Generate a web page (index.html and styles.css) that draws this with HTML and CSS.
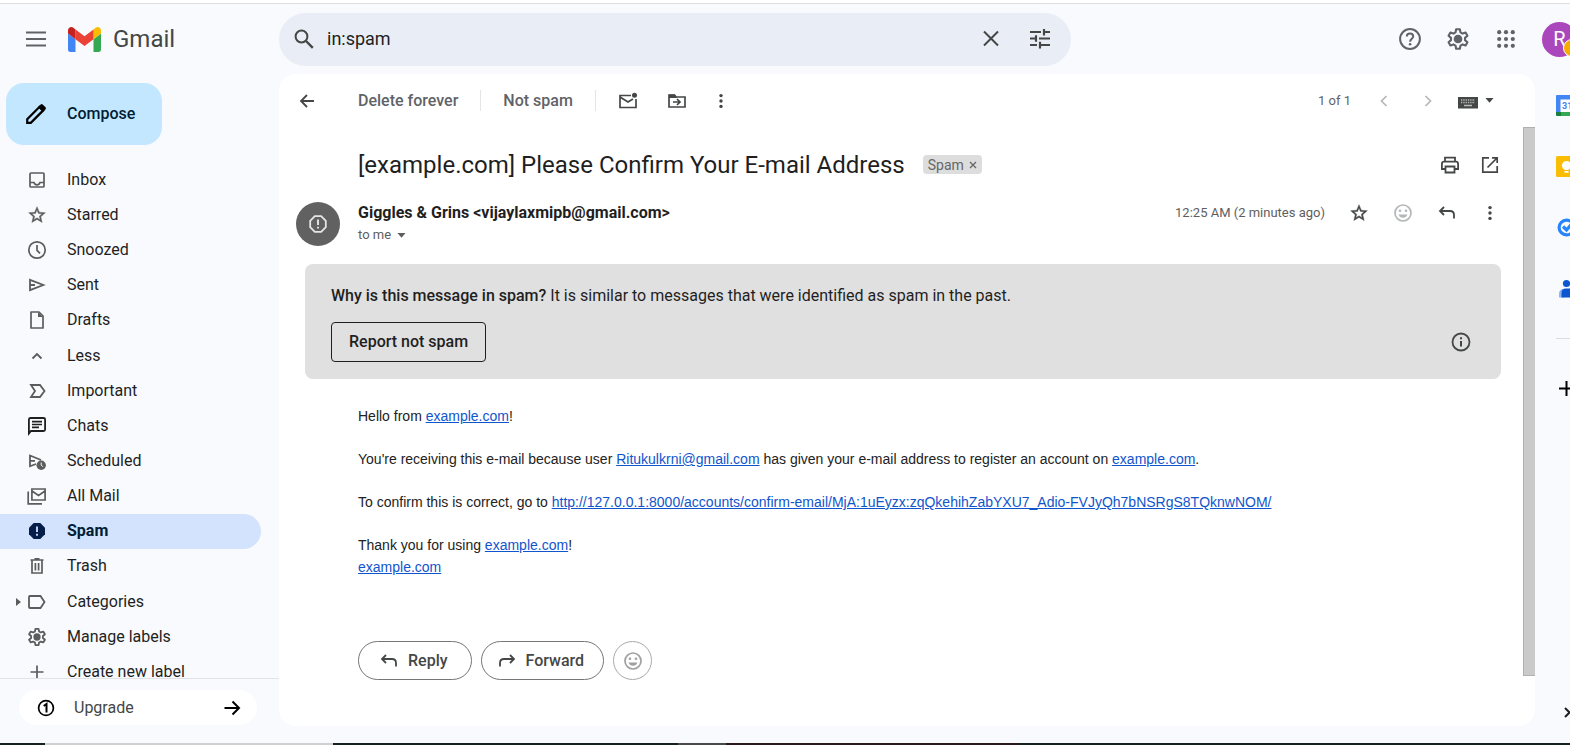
FILE: index.html
```html
<!DOCTYPE html>
<html lang="en">
<head>
<meta charset="utf-8">
<title>Gmail - Spam</title>
<link rel="stylesheet" href="styles.css">
</head>
<body>
<svg class="sprite" aria-hidden="true">
  <symbol id="reply" viewBox="0 0 20 20"><path d="M7 4 3 8l4 4M3.500 8H13q4 0 4 4v3.500" fill="none" stroke="currentColor" stroke-width="1.800"/></symbol>
  <symbol id="smile" viewBox="0 0 20 20"><circle cx="10" cy="10" r="8" fill="none" stroke="currentColor" stroke-width="1.700"/><circle cx="7" cy="7.800" r="1.300" fill="currentColor"/><circle cx="13" cy="7.800" r="1.300" fill="currentColor"/><path d="M5.500 11.500h9c-.7 2-2.400 3.300-4.500 3.300s-3.800-1.300-4.500-3.300z" fill="currentColor"/></symbol>
  <symbol id="more" viewBox="0 0 20 20"><circle cx="10" cy="4" r="1.900"/><circle cx="10" cy="10" r="1.900"/><circle cx="10" cy="16" r="1.900"/></symbol>
  <symbol id="star" viewBox="0 0 24 24"><path d="M22 9.240l-7.190-.62L12 2 9.190 8.630 2 9.240l5.460 4.730L5.820 21 12 17.270 18.180 21l-1.630-7.030L22 9.240zM12 15.400l-3.760 2.270 1-4.280-3.320-2.880 4.380-.38L12 6.100l1.710 4.040 4.380.38-3.320 2.880 1 4.280L12 15.400z" stroke="currentColor" stroke-width=".5"/></symbol>
  <symbol id="gear" viewBox="0 0 24 24"><path d="M10.300 2h3.400l.6 2.900 1.900 1.100 2.800-.95 1.700 2.950-2.200 1.950v2.100l2.200 1.950-1.700 2.950-2.800-.95-1.900 1.100-.6 2.900h-3.400l-.6-2.900L7.800 16l-2.800.95L3.300 14l2.200-1.950v-2.100L3.300 8 5 5.050 7.800 6l1.900-1.100z" transform="translate(0 1)" fill="none" stroke="currentColor" stroke-width="2" stroke-linejoin="round"/><circle cx="12" cy="12" r="4"/></symbol>
</svg>

<div class="app">
  <header class="topbar">
    <div class="brand">
      <button class="icon-btn" aria-label="Main menu"><svg class="i20" viewBox="0 0 20 20"><path d="M0 3.500h20M0 10h20M0 16.500h20" stroke="currentColor" stroke-width="2"/></svg></button>
      <a class="logo" href="#">
        <svg class="m-logo" viewBox="52 42 88 66" aria-hidden="true"><path fill="#4285f4" d="M58 108h14V74L52 59v43c0 3.320 2.690 6 6 6"/><path fill="#34a853" d="M120 108h14c3.320 0 6-2.690 6-6V59l-20 15"/><path fill="#fbbc04" d="M120 48v26l20-15v-8c0-7.420-8.470-11.650-14.400-7.200"/><path fill="#ea4335" d="M72 74V48l24 18 24-18v26L96 92"/><path fill="#c5221f" d="M52 51v8l20 15V48l-5.600-4.200c-5.940-4.450-14.400-.22-14.400 7.200"/></svg>
        <span>Gmail</span>
      </a>
    </div>
    <form class="search">
      <button class="icon-btn" type="button" aria-label="Search"><svg class="i20" viewBox="0 0 20 20"><circle cx="7.500" cy="7.500" r="5.900" fill="none" stroke="currentColor" stroke-width="2"/><path d="m12 12 6.800 6.800" stroke="currentColor" stroke-width="2.400"/></svg></button>
      <input type="text" value="in:spam" aria-label="Search mail">
      <button class="icon-btn" type="button" aria-label="Clear search"><svg class="i20" viewBox="0 0 20 20"><path d="m3 2.500 14 14M17 2.500l-14 14" stroke="currentColor" stroke-width="2"/></svg></button>
      <button class="icon-btn tune" type="button" aria-label="Search options"><svg class="i20" viewBox="0 0 20 20"><path d="M0 3h11M14 3h6M14 0v6.500M0 9.500h6M9 9.500h11M6 6.200v6.600M0 16h7M10 16h10M10 12.700V19.500" stroke="currentColor" stroke-width="2.200"/></svg></button>
    </form>
    <div class="tools">
      <button class="icon-btn" aria-label="Support"><svg class="i22" viewBox="0 0 22 22"><circle cx="11" cy="11" r="9.900" fill="none" stroke="currentColor" stroke-width="2"/><path d="M7.800 8.600c0-1.900 1.400-3.200 3.200-3.200s3.200 1.200 3.200 3c0 2.300-3.100 2.600-3.100 5.300" fill="none" stroke="currentColor" stroke-width="2"/><circle cx="11.100" cy="16.300" r="1.300"/></svg></button>
      <button class="icon-btn" aria-label="Settings"><svg class="i26"><use href="#gear"/></svg></button>
      <button class="icon-btn" aria-label="Google apps"><svg class="i18" viewBox="0 0 18 18"><circle cx="2.200" cy="2.200" r="2.100"/><circle cx="9" cy="2.200" r="2.100"/><circle cx="15.800" cy="2.200" r="2.100"/><circle cx="2.200" cy="9" r="2.100"/><circle cx="9" cy="9" r="2.100"/><circle cx="15.800" cy="9" r="2.100"/><circle cx="2.200" cy="15.800" r="2.100"/><circle cx="9" cy="15.800" r="2.100"/><circle cx="15.800" cy="15.800" r="2.100"/></svg></button>
      <button class="account" aria-label="Account">R<span class="alert"></span></button>
    </div>
  </header>

  <aside class="sidebar">
    <button class="compose"><svg class="i20" viewBox="0 0 20 20"><path d="M1.200 18.800v-3.600L13.600 2.800l3.600 3.600L4.800 18.800z" fill="none" stroke="currentColor" stroke-width="2.200"/><path d="m12 3.200 2.700-2.700q1-.8 2 0l2.800 2.800q.8 1 0 2L16.800 8z"/></svg>Compose</button>
    <nav class="folders">
      <a href="#"><svg class="i20" viewBox="0 0 20 20"><rect x="3" y="3" width="14" height="14" rx="1" fill="none" stroke="currentColor" stroke-width="1.700"/><path d="M3 12.500h4c.5 1.600 1.600 2.300 3 2.300s2.500-.7 3-2.300h4" fill="none" stroke="currentColor" stroke-width="1.700"/></svg>Inbox</a>
      <a href="#"><svg class="i20"><use href="#star"/></svg>Starred</a>
      <a href="#"><svg class="i20" viewBox="0 0 20 20"><circle cx="10" cy="10" r="8.200" fill="none" stroke="currentColor" stroke-width="1.700"/><path d="M10 5v5.300l3 3" fill="none" stroke="currentColor" stroke-width="1.700"/></svg>Snoozed</a>
      <a href="#"><svg class="i20" viewBox="0 0 20 20"><path d="M3 4.800 16.300 10 3 15.200zM3 10h5" fill="none" stroke="currentColor" stroke-width="1.800"/></svg>Sent</a>
      <a href="#"><svg class="i20" viewBox="0 0 20 20"><path d="M4 2h8l4 4v12H4z" fill="none" stroke="currentColor" stroke-width="1.700" stroke-linejoin="round"/><path d="M11 2v5h5z"/></svg>Drafts</a>
      <a href="#" class="section"><svg class="i20" viewBox="0 0 20 20"><path d="m5.500 12.500 4.500-4.500 4.500 4.500" fill="none" stroke="currentColor" stroke-width="1.800"/></svg>Less</a>
      <a href="#"><svg class="i20" viewBox="0 0 20 20"><path d="M4 4h9l4.500 6-4.500 6H4l4-6z" fill="none" stroke="currentColor" stroke-width="1.800"/></svg>Important</a>
      <a href="#"><svg class="i20 dark" viewBox="0 0 20 20"><path d="M1.900 17.500V3.500Q2 2 3.500 2h13q1.600 0 1.600 1.500v10q0 1.500-1.600 1.500H4z" fill="none" stroke="currentColor" stroke-width="1.800"/><path d="M5 5.700h10M5 8.500h10M5 11.300h7" stroke="currentColor" stroke-width="1.700"/></svg>Chats</a>
      <a href="#"><svg class="i20" viewBox="0 0 20 20"><path d="M9 13 3 15.300V4.500L14 9M3 9.900h5" fill="none" stroke="currentColor" stroke-width="1.800"/><circle cx="14.200" cy="14.200" r="4.700"/><path d="M14.200 11.500V14l1.700 1.800" fill="none" stroke="#f8fafd"/></svg>Scheduled</a>
      <a href="#"><svg class="i20" viewBox="0 0 20 20"><path d="M4.900 3h13.200v11H4.900zM5 5l6.500 4.500L18 5M1.200 5.500v12.300H15" fill="none" stroke="currentColor" stroke-width="1.700"/></svg>All Mail</a>
      <a href="#" class="current" aria-current="page"><svg class="i20" viewBox="0 0 20 20"><path d="M6.700 2h6.600L18 6.700v6.600L13.300 18H6.700L2 13.300V6.700z"/><path d="M10 5.500v5.500M10 12.700v2" stroke="#d3e3fd" stroke-width="1.800"/></svg>Spam</a>
      <a href="#"><svg class="i20" viewBox="0 0 20 20"><path d="M3.500 4h13M7.500 2.800h5M5 4.500V17h10V4.500M8.400 7v7.500M11.600 7v7.500" fill="none" stroke="currentColor" stroke-width="1.700"/></svg>Trash</a>
      <a href="#" class="section categories"><svg class="twisty" viewBox="0 0 5 8"><path d="M0 0l5 4-5 4z"/></svg><svg class="i20" viewBox="0 0 20 20"><path d="M3 4h10.500l4 6-4 6H3q-1 0-1-1V5q0-1 1-1z" fill="none" stroke="currentColor" stroke-width="1.800"/></svg>Categories</a>
      <a href="#"><svg class="i20" viewBox="1 1 22 22"><use href="#gear" width="24" height="24"/></svg>Manage labels</a>
      <a href="#"><svg class="i20" viewBox="0 0 20 20"><path d="M3.500 10h13M10 3.500v13" stroke="currentColor" stroke-width="1.700"/></svg>Create new label</a>
    </nav>
    <div class="upgrade-bar">
      <button class="upgrade"><svg class="i18" viewBox="0 0 18 18"><circle cx="9" cy="9" r="7.400" fill="none" stroke="currentColor" stroke-width="1.700"/><path d="M6.700 7 9.500 5v8.500" fill="none" stroke="currentColor" stroke-width="2"/></svg><span>Upgrade</span><svg class="i18" viewBox="0 0 18 18"><path d="M1.500 9h14M9.500 2.500 16 9l-6.500 6.500" fill="none" stroke="currentColor" stroke-width="2"/></svg></button>
    </div>
  </aside>

  <main class="panel">
    <div class="toolbar">
      <button class="icon-btn back" aria-label="Back to Spam"><svg class="i18" viewBox="0 0 18 18"><path d="M16 9H3M9 3 3 9l6 6" fill="none" stroke="currentColor" stroke-width="1.800"/></svg></button>
      <button class="text-btn">Delete forever</button>
      <span class="rule"></span>
      <button class="text-btn">Not spam</button>
      <span class="rule"></span>
      <div class="actions">
        <button class="icon-btn" aria-label="Mark as unread"><svg class="i20" viewBox="0 0 20 20"><path d="M13 4.500H2v12h16V8M2 6l8 5 5-3" fill="none" stroke="currentColor" stroke-width="1.700"/><circle cx="16.500" cy="4.200" r="2.500"/></svg></button>
        <button class="icon-btn" aria-label="Move to"><svg class="i20" viewBox="0 0 20 20"><path d="M2 16V4h5.500L9 6h9v10z" fill="none" stroke="currentColor" stroke-width="1.700"/><path d="M2 3.500h6L10 7H2z"/><path d="M6 11h6M10 8l3 3-3 3" fill="none" stroke="currentColor" stroke-width="1.700"/></svg></button>
        <button class="icon-btn more" aria-label="More"><svg class="i18"><use href="#more"/></svg></button>
      </div>
      <span class="count">1 of 1</span>
      <div class="pager">
        <button class="icon-btn" disabled aria-label="Newer"><svg class="i20" viewBox="0 0 20 20"><path d="m12.500 5-5 5 5 5" fill="none" stroke="currentColor" stroke-width="1.700"/></svg></button>
        <button class="icon-btn" disabled aria-label="Older"><svg class="i20" viewBox="0 0 20 20"><path d="m7.500 5 5 5-5 5" fill="none" stroke="currentColor" stroke-width="1.700"/></svg></button>
      </div>
      <button class="icon-btn keyboard" aria-label="Input tools"><svg class="i20" viewBox="0 0 20 20"><path d="M0 6h20v11.500H0z"/><path d="M3 9h14M3 11.500h14" stroke="#bbb" stroke-width="1.300" stroke-dasharray="1.300 1"/><path d="M6 14.500h8" stroke="#bbb" stroke-width="1.300"/></svg><svg class="caret" viewBox="0 0 8 5"><path d="M0 0h8L4 4.800z"/></svg></button>
    </div>

    <div class="scroll">
      <article class="thread">
        <div class="subject">
          <h1>[example.com] Please Confirm Your E-mail Address</h1>
          <span class="tag">Spam <button aria-label="Remove label Spam"><svg viewBox="0 0 8 8"><path d="m1 1 6 6M7 1 1 7" stroke="currentColor" stroke-width="1.300"/></svg></button></span>
          <div class="subject-tools">
            <button class="icon-btn" aria-label="Print"><svg class="i20" viewBox="0 0 20 20"><path d="M5 6.500V2.700h10v3.800M5 14H1.900V9Q2 6.700 4 6.700h12q2 0 2.100 2.300v5H15M5.500 11.500h9v6h-9z" fill="none" stroke="currentColor" stroke-width="1.800"/></svg></button>
            <button class="icon-btn" aria-label="Open in new window"><svg class="i20" viewBox="0 0 20 20"><path d="M9 2.800H2.800v14.400h14.400V11M12 2.800h5.200V8M17 3l-9.500 9.500" fill="none" stroke="currentColor" stroke-width="1.700"/></svg></button>
          </div>
        </div>

        <div class="sender">
          <span class="face"><svg class="i20" viewBox="0 0 20 20"><path d="M6.800 2.200h6.400l4.600 4.600v6.400l-4.600 4.600H6.800l-4.600-4.600V6.800z" fill="none" stroke="currentColor" stroke-width="1.800"/><path d="M10 5.500V11M10 12.700v1.800" stroke="currentColor" stroke-width="1.900"/></svg></span>
          <div class="who">
            <strong>Giggles &amp; Grins &lt;vijaylaxmipb@gmail.com&gt;</strong>
            <button class="recipients">to me <svg class="caret" viewBox="0 0 8 5"><path d="M0 0h8L4 4.800z"/></svg></button>
          </div>
          <div class="meta">
            <span>12:25 AM (2 minutes ago)</span>
            <button class="icon-btn" aria-label="Star"><svg class="i20"><use href="#star"/></svg></button>
            <button class="icon-btn faint" aria-label="Add reaction"><svg class="i20"><use href="#smile"/></svg></button>
            <button class="icon-btn" aria-label="Reply"><svg class="i20"><use href="#reply"/></svg></button>
            <button class="icon-btn" aria-label="More"><svg class="i18"><use href="#more"/></svg></button>
          </div>
        </div>

        <section class="notice">
          <p><b>Why is this message in spam?</b> It is similar to messages that were identified as spam in the past.</p>
          <div class="notice-row">
            <button class="report">Report not spam</button>
            <button class="icon-btn" aria-label="Learn more"><svg class="i20" viewBox="0 0 20 20"><circle cx="10" cy="10" r="8.500" fill="none" stroke="currentColor" stroke-width="1.800"/><path d="M10 5.300v2M10 9v5.500" stroke="currentColor" stroke-width="2"/></svg></button>
          </div>
        </section>

        <div class="message">
          <p>Hello from <a href="#">example.com</a>!</p>
          <p>You're receiving this e-mail because user <a href="#">Ritukulkrni@gmail.com</a> has given your e-mail address to register an account on <a href="#">example.com</a>.</p>
          <p>To confirm this is correct, go to <a href="#">http://127.0.0.1:8000/accounts/confirm-email/MjA:1uEyzx:zqQkehihZabYXU7_Adio-FVJyQh7bNSRgS8TQknwNOM/</a></p>
          <p>Thank you for using <a href="#">example.com</a>!<br><a href="#">example.com</a></p>
        </div>

        <div class="respond">
          <button class="pill"><svg class="i20"><use href="#reply"/></svg>Reply</button>
          <button class="pill forward"><svg class="i20 flip"><use href="#reply"/></svg>Forward</button>
          <button class="pill round" aria-label="Add reaction"><svg class="i20"><use href="#smile"/></svg></button>
        </div>
      </article>
      <div class="scrollbar"></div>
    </div>
  </main>

  <aside class="rail">
    <button class="icon-btn" aria-label="Calendar"><svg class="i21" viewBox="0 0 21 21"><path fill="#4285f4" d="M1 0h19q1 0 1 1v19H0V1q0-1 1-1z"/><path fill="#188038" d="M0 17h5v4H1q-1 0-1-1z"/><path fill="#34a853" d="M5 17h16v4H5z"/><path fill="#fff" d="M4.500 4.500h12.500v12.500H4.500z"/><text x="6" y="14" font-size="9" fill="#4285f4">31</text></svg></button>
    <button class="icon-btn" aria-label="Keep"><svg class="i21" viewBox="0 0 21 21"><rect width="21" height="21" rx="1.500" fill="#fbbc04"/><circle cx="10.500" cy="9.500" r="4.600" fill="#fff"/><path d="M8.500 13h4v1h-4zM8.500 15h4v1.700h-4z" fill="#fff"/></svg></button>
    <button class="icon-btn" aria-label="Tasks"><svg class="i21" viewBox="0 0 21 21"><circle cx="10.500" cy="10.500" r="7.400" fill="none" stroke="#2684fc" stroke-width="3.200"/><path d="m7 9.500 3.500 3.500 7-8" fill="none" stroke="#2684fc" stroke-width="3.200"/></svg></button>
    <button class="icon-btn" aria-label="Contacts"><svg class="i21" viewBox="0 0 21 21"><path d="M3 19.500V16q0-5 5-5v8.500z" fill="#8ab4f8"/><circle cx="10.500" cy="5.500" r="3.600" fill="#0b57d0"/><path d="M5.500 19.500V15q0-4.500 4.500-4.500h8v9z" fill="#0b57d0"/></svg></button>
    <hr>
    <button class="icon-btn plus" aria-label="Get add-ons"><svg class="i21" viewBox="0 0 21 21"><path d="M3 10.500h15M10.500 3v15" stroke="#000" stroke-width="2"/></svg></button>
    <button class="icon-btn hide" aria-label="Hide side panel"><svg class="i21" viewBox="0 0 21 21"><path d="m9 6 4.500 4.500L9 15" fill="none" stroke="#1f1f1f" stroke-width="2"/></svg></button>
  </aside>
  <div class="taskbar"></div>
</div>
</body>
</html>
```
FILE: styles.css
```css
* { box-sizing: border-box; }

body {
  margin: 0;
  overflow: hidden;
  background: #f8fafd;
  color: #1f1f1f;
  font: 16px/20px Roboto, "Liberation Sans", sans-serif;
}

button, input {
  padding: 0;
  border: 0;
  background: none;
  color: inherit;
  font: inherit;
}

button { cursor: pointer; }
a { color: inherit; text-decoration: none; }
h1, p { margin: 0; }
svg { display: block; flex: none; fill: currentColor; }

.sprite { display: none; }
.i18 { width: 18px; height: 18px; }
.i20 { width: 20px; height: 20px; }
.i21 { width: 21px; height: 21px; }
.i22 { width: 22px; height: 22px; }
.i26 { width: 26px; height: 26px; }
.caret { width: 9px; height: 5px; }
.flip { transform: scaleX(-1); }

.icon-btn {
  display: flex;
  align-items: center;
  justify-content: center;
  flex: none;
  color: #444746;
}

.app {
  display: grid;
  grid-template: 70px minmax(0, 1fr) 2px / 279px minmax(0, 1fr) 35px;
  height: 100vh;
  border-top: 4px solid #fff;
  position: relative;
}

.app::before {
  content: "";
  position: absolute;
  top: -1px;
  left: 0;
  right: 0;
  height: 1px;
  background: #dedede;
}

/* Top bar */
.topbar { grid-column: 1 / -1; display: flex; align-items: center; }

.brand {
  flex: none;
  width: 279px;
  padding-left: 26px;
  display: flex;
  align-items: center;
  gap: 22px;
}

.brand .icon-btn { color: #5f6368; }
.logo { display: flex; align-items: center; gap: 12px; color: #444746; font-size: 24px; line-height: 28px; }
.m-logo { width: 33px; height: 25px; }

.search {
  flex: 0 1 792px;
  height: 53px;
  padding: 0 21px 0 15px;
  display: flex;
  align-items: center;
  border-radius: 27px;
  background: #e9eef6;
}

.search input { flex: 1; min-width: 0; padding-left: 13px; outline: 0; font-size: 18px; }
.tune { margin-left: 29px; }

.tools {
  margin: 0 -7px 0 auto;
  display: flex;
  align-items: center;
  color: #5f6368;
}

.tools .icon-btn { width: 48px; color: inherit; }

.account {
  position: relative;
  width: 35px;
  height: 35px;
  margin-left: 12px;
  border-radius: 50%;
  background: #ab47bc;
  color: #fff;
  font-size: 20px;
}

.alert {
  position: absolute;
  right: -4px;
  bottom: 0;
  width: 18px;
  height: 18px;
  border: 1px solid #fff;
  border-radius: 50%;
  background: #f9ab00;
}

/* Sidebar */
.sidebar { display: flex; flex-direction: column; min-height: 0; }

.compose {
  flex: none;
  align-self: flex-start;
  display: flex;
  align-items: center;
  gap: 21px;
  height: 62px;
  margin: 9px 0 18px 6px;
  padding: 0 27px 0 20px;
  border-radius: 18px;
  background: #c2e7ff;
  color: #001d35;
  font-weight: 500;
}

.compose svg { color: #000; }

.folders { flex: 1; min-height: 0; overflow: hidden; }

.folders a {
  display: flex;
  align-items: center;
  gap: 20px;
  height: 35px;
  margin-right: 18px;
  padding: 0 0 1px 27px;
  border-radius: 0 18px 18px 0;
}

.folders svg { color: #5a5d5c; }
.folders .dark { color: #1f1f1f; }
.folders .section { margin-top: 1px; }
.folders .categories { padding-left: 16px; gap: 6px; }
.categories .i20 { margin-right: 14px; }
.twisty { width: 5px; height: 8px; }
.folders .current { background: #d3e3fd; color: #001d35; font-weight: 700; }
.folders .current svg { color: #041e49; }

.upgrade-bar { flex: none; padding: 11px 22px 18px 19px; border-top: 1px solid #e0e3e7; }

.upgrade {
  display: flex;
  align-items: center;
  width: 100%;
  height: 35px;
  padding: 0 16px 0 18px;
  border-radius: 18px;
  background: #fff;
  color: #444746;
}

.upgrade span { flex: 1; padding-left: 19px; text-align: left; }
.upgrade svg { color: #000; }

/* Message panel */
.panel {
  display: flex;
  flex-direction: column;
  min-height: 0;
  margin-bottom: 17px;
  border-radius: 17px;
  background: #fff;
  overflow: hidden;
}

.toolbar {
  flex: none;
  display: flex;
  align-items: center;
  height: 53px;
  padding: 0 41px 0 19px;
  color: #5f6368;
}

.back { margin-right: 42px; }
.text-btn { font-weight: 500; }
.rule { width: 1px; height: 21px; margin: 0 22px; background: #e3e5e8; }
.actions { display: flex; gap: 29px; }
.actions .more { margin-left: -4px; }
.count { margin-left: auto; font-size: 13px; }
.pager { display: flex; gap: 24px; margin: 0 20px 0 23px; }
.pager .icon-btn { color: #b4b6b8; }
.keyboard { gap: 7px; }

.scroll { flex: 1; min-height: 0; display: flex; align-items: flex-start; }
.thread { flex: 1; min-width: 0; }

.scrollbar {
  align-self: stretch;
  width: 12px;
  margin-bottom: 50px;
  border: solid #b0b0b0;
  border-width: 1px 0 1px 1px;
  background: #cacaca;
}

.subject {
  display: flex;
  align-items: center;
  height: 75px;
  padding: 0 23px 0 79px;
}

.subject h1 { font-size: 24px; line-height: 32px; font-weight: 400; }

.tag {
  display: flex;
  align-items: center;
  gap: 5px;
  height: 19px;
  margin-left: 18px;
  padding: 0 5px;
  border-radius: 4px;
  background: #ddd;
  color: #666;
  font-size: 14px;
}

.tag svg { width: 8px; height: 8px; }
.subject-tools { display: flex; gap: 20px; margin-left: auto; }

.sender {
  display: flex;
  align-items: flex-start;
  padding: 0 24px 0 17px;
}

.face {
  display: flex;
  align-items: center;
  justify-content: center;
  width: 44px;
  height: 44px;
  margin-right: 18px;
  border-radius: 50%;
  background: #616161;
  color: #e6e6e6;
}

.who strong { display: block; line-height: 22px; }
.recipients { display: flex; align-items: center; gap: 6px; color: #5e5e5e; font-size: 13px; line-height: 22px; }

.meta {
  display: flex;
  align-items: center;
  gap: 24px;
  height: 22px;
  margin-left: auto;
  color: #5e5e5e;
  font-size: 13px;
}

.meta .faint { color: #b4b6b8; }

.notice {
  margin: 18px 22px 0 26px;
  padding: 22px 30px 17px 26px;
  border-radius: 8px;
  background: #e0e0e0;
}

.notice b { font-weight: 500; }
.notice-row { display: flex; align-items: center; justify-content: space-between; margin-top: 16px; }

.report {
  height: 40px;
  padding: 0 17px;
  border: 1px solid #1f1f1f;
  border-radius: 4px;
  font-weight: 500;
}

.message {
  display: flex;
  flex-direction: column;
  gap: 21px;
  margin: 26px 24px 0 79px;
  color: #222;
  font: 14px/22px "Liberation Sans", Arial, sans-serif;
}

.message a { color: #1155cc; text-decoration: underline; }

.respond { display: flex; gap: 9px; margin: 63px 0 0 79px; }

.pill {
  display: flex;
  align-items: center;
  gap: 9px;
  height: 39px;
  padding: 0 23px 0 20px;
  border: 1px solid #747775;
  border-radius: 20px;
  color: #444746;
  font-weight: 500;
}

.forward { padding: 0 19px 0 15px; }
.round { width: 39px; padding: 0 9px; border-color: #aaa; color: #a0a0a0; }

/* Side rail */
.rail {
  display: flex;
  flex-direction: column;
  align-items: flex-start;
  gap: 40px;
  padding: 21px 0 20px 21px;
  overflow: hidden;
}

.rail text { font-family: Roboto, sans-serif; font-weight: 700; }
.rail hr { width: 100%; height: 1px; margin: -1px 0; border: 0; background: #dadce0; }
.rail .hide { margin-top: auto; }

.taskbar {
  grid-column: 1 / -1;
  background: linear-gradient(90deg, #14231f 45px, #d0d0d0 45px 333px, #14231f 333px 678px, #4a4a4a 678px 726px, #2a1a1c 726px 1020px, #14231f 1020px);
}
```
